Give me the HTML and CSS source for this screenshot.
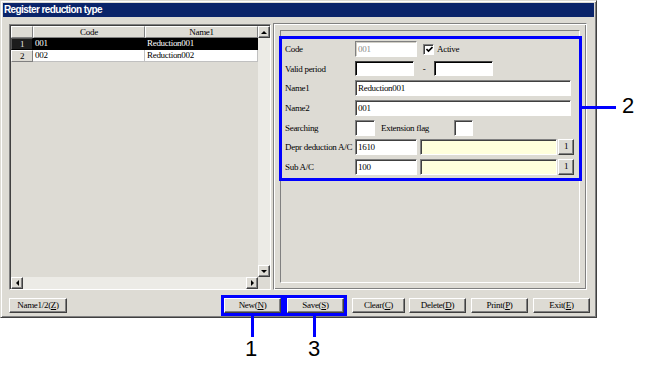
FILE: index.html
```html
<!DOCTYPE html>
<html lang="en">
<head>
  <meta charset="UTF-8">
  <title>Register reduction type</title>
  <link rel="stylesheet" href="styles.css">
</head>
<body>
  <div class="window">
    <div class="titlebar">Register reduction type</div>
    <div class="main">
      <div class="grid">
        <div class="grid-top">
          <div class="table">
            <div class="trow head">
              <div class="rh"></div>
              <div class="hc code">Code</div>
              <div class="hc name">Name1</div>
            </div>
            <div class="trow sel">
              <div class="rh">1</div>
              <div class="c code">001</div>
              <div class="c name">Reduction001</div>
            </div>
            <div class="trow">
              <div class="rh">2</div>
              <div class="c code">002</div>
              <div class="c name">Reduction002</div>
            </div>
          </div>
          <div class="vscroll">
            <div class="arrow up"></div>
            <div class="track"></div>
            <div class="arrow down"></div>
          </div>
        </div>
        <div class="hscroll">
          <div class="arrow left"></div>
          <div class="track"></div>
          <div class="arrow right"></div>
          <div class="corner"></div>
        </div>
      </div>

      <div class="side">
        <div class="inner">
          <div class="form">
            <div class="row">
              <div class="lbl">Code</div>
              <div class="field off w62">001</div>
              <div class="check">
                <svg width="7" height="7" viewBox="0 0 7 7"><path d="M0.5 3 L2.5 5 L6.5 1" fill="none" stroke="#000" stroke-width="1.6"/></svg>
              </div>
              <div class="check-lbl">Active</div>
            </div>
            <div class="row">
              <div class="lbl">Valid period</div>
              <div class="field dark w59"></div>
              <div class="dash">-</div>
              <div class="field dark w59"></div>
            </div>
            <div class="row">
              <div class="lbl">Name1</div>
              <div class="field w216">Reduction001</div>
            </div>
            <div class="row">
              <div class="lbl">Name2</div>
              <div class="field w216">001</div>
            </div>
            <div class="row">
              <div class="lbl">Searching</div>
              <div class="field w20"></div>
              <div class="lbl2">Extension flag</div>
              <div class="field w19"></div>
            </div>
            <div class="row">
              <div class="lbl">Depr deduction A/C</div>
              <div class="field w62">1610</div>
              <div class="field yellow w137"></div>
              <div class="pick">1</div>
            </div>
            <div class="row">
              <div class="lbl">Sub A/C</div>
              <div class="field w62">100</div>
              <div class="field yellow w137"></div>
              <div class="pick">1</div>
            </div>
          </div>
        </div>
      </div>
    </div>

    <div class="buttons">
      <div class="btn wide">Name1/2(<u>Z</u>)</div>
      <div class="mark first"><div class="btn">New(<u>N</u>)</div></div>
      <div class="mark"><div class="btn">Save(<u>S</u>)</div></div>
      <div class="btn clear">Clear(<u>C</u>)</div>
      <div class="btn gap4">Delete(<u>D</u>)</div>
      <div class="btn gap5">Print(<u>P</u>)</div>
      <div class="btn gap5">Exit(<u>E</u>)</div>
    </div>
  </div>

  <!-- callouts -->
  <div class="note hline"></div>
  <div class="note num n2">2</div>
  <div class="note vline v1"></div>
  <div class="note num n1">1</div>
  <div class="note vline v3"></div>
  <div class="note num n3">3</div>
</body>
</html>
```
FILE: styles.css
```css
body {
  margin: 0;
  background: #fff;
  font-family: "Liberation Serif", serif;
  font-size: 9px;
  letter-spacing: -0.3px;
  color: #000;
  position: relative;
  width: 647px;
  height: 368px;
  overflow: hidden;
}
.window {
  width: 597px;
  height: 318px;
  box-sizing: border-box;
  background: #dddbd4;
  border: 1px solid;
  border-color: #dddbd4 #404040 #404040 #dddbd4;
  box-shadow: inset 1px 1px #fff, inset -1px -1px #808080;
  padding: 2px;
  display: flex;
  flex-direction: column;
}
.titlebar {
  height: 14px;
  flex: none;
  background: #0a246a;
  color: #fff;
  font: bold 10px "Liberation Sans", sans-serif;
  line-height: 14px;
  padding-left: 1px;
  letter-spacing: -0.6px;
}
.main {
  display: flex;
  margin-top: 6px;
  height: 267px;
  flex: none;
  padding-left: 6px;
}

/* grid */
.grid {
  margin-top: 1px;
  width: 262px;
  height: 266px;
  box-sizing: border-box;
  border: 1px solid;
  border-color: #808080 #fff #fff #808080;
  box-shadow: inset 1px 1px #404040;
  padding: 1px 0 0 1px;
  display: flex;
  flex-direction: column;
}
.grid-top {
  flex: 1;
  display: flex;
  min-height: 0;
}
.table {
  flex: 1;
  background: #dddbd4;
}
.trow {
  display: flex;
  height: 12px;
}
.rh, .hc {
  box-sizing: border-box;
  background: #dddbd4;
  border: 1px solid;
  border-color: #fff #808080 #808080 #fff;
  text-align: center;
  line-height: 10px;
}
.rh {
  width: 22px;
}
.code {
  width: 112px;
}
.name {
  width: 113px;
}
.c {
  box-sizing: border-box;
  background: #fff;
  border-right: 1px solid #c0c0c0;
  border-bottom: 1px solid #c0c0c0;
  padding-left: 2px;
  line-height: 11px;
  white-space: nowrap;
}
.sel .c {
  background: #000;
  color: #fff;
  border-color: #000;
}
.sel .rh {
  background: #1c1c1c;
  color: #e8e8e8;
  border-color: #555 #000 #000 #555;
}
.vscroll {
  width: 12px;
  display: flex;
  flex-direction: column;
}
.hscroll {
  height: 12px;
  flex: none;
  display: flex;
}
.track {
  flex: 1;
  background: #ecebe6;
}
.corner {
  width: 12px;
  background: #dddbd4;
}
.arrow {
  width: 12px;
  height: 12px;
  flex: none;
  box-sizing: border-box;
  background: #dddbd4;
  border: 1px solid;
  border-color: #fff #404040 #404040 #fff;
  box-shadow: inset -1px -1px #808080;
  display: flex;
  align-items: center;
  justify-content: center;
}
.arrow::after {
  content: "";
  width: 0;
  height: 0;
}
.arrow.up::after {
  border-left: 3px solid transparent;
  border-right: 3px solid transparent;
  border-bottom: 3px solid #000;
}
.arrow.down::after {
  border-left: 3px solid transparent;
  border-right: 3px solid transparent;
  border-top: 3px solid #000;
}
.arrow.left::after {
  border-top: 3px solid transparent;
  border-bottom: 3px solid transparent;
  border-right: 3px solid #000;
}
.arrow.right::after {
  border-top: 3px solid transparent;
  border-bottom: 3px solid transparent;
  border-left: 3px solid #000;
}

/* right panel */
.side {
  margin-left: 2px;
  width: 314px;
  height: 267px;
  box-sizing: border-box;
  border: 1px solid;
  border-color: #808080 #fff #fff #808080;
  box-shadow: inset 1px 1px #fff, inset -1px -1px #808080;
  padding: 6px 0 0 6px;
}
.inner {
  width: 300px;
  height: 253px;
  box-sizing: border-box;
  border: 1px solid;
  border-color: #808080 #fff #fff #808080;
}
.form {
  margin: 5px -3px 0 -2px;
  border: 3px solid #0000ff;
  padding: 2px 0 3px 3px;
  display: flex;
  flex-direction: column;
  gap: 3.7px;
}
.row {
  display: flex;
  align-items: center;
  height: 16px;
}
.lbl {
  width: 70px;
  flex: none;
  white-space: nowrap;
}
.field {
  height: 16px;
  flex: none;
  box-sizing: border-box;
  background: #fff;
  border: 1px solid;
  border-color: #808080 #fff #fff #808080;
  box-shadow: inset 1px 1px #404040;
  padding-left: 2px;
  line-height: 14px;
  white-space: nowrap;
}
.field.off {
  box-shadow: inset 1px 1px #d0cec6;
  color: #8a8a8a;
}
.field.dark {
  height: 15px;
  border-color: #404040 #fff #fff #404040;
  box-shadow: inset 1px 1px #000;
}
.field.yellow {
  background: #ffffdc;
  margin-left: 3px;
}
.w62 { width: 62px; }
.w59 { width: 59px; }
.w216 { width: 216px; }
.w20 { width: 20px; }
.w19 { width: 19px; }
.w137 { width: 137px; }
.check {
  margin-left: 6px;
  width: 11px;
  height: 11px;
  box-sizing: border-box;
  background: #fff;
  border: 1px solid;
  border-color: #808080 #fff #fff #808080;
  box-shadow: inset 1px 1px #404040;
  display: flex;
  align-items: center;
  justify-content: center;
}
.check svg {
  margin: 1px 0 0 1px;
}
.check-lbl {
  margin-left: 3px;
}
.dash {
  width: 20px;
  text-align: center;
}
.lbl2 {
  margin-left: 6px;
  width: 73px;
  white-space: nowrap;
}
.pick {
  margin-left: 1px;
  width: 16px;
  height: 16px;
  box-sizing: border-box;
  background: #dddbd4;
  border: 1px solid;
  border-color: #fff #404040 #404040 #fff;
  box-shadow: inset -1px -1px #808080;
  text-align: center;
  line-height: 13px;
}

/* bottom buttons */
.buttons {
  display: flex;
  align-items: center;
  margin-top: 5px;
  height: 21px;
  flex: none;
  padding-left: 6px;
}
.btn {
  width: 57px;
  height: 15px;
  flex: none;
  box-sizing: border-box;
  background: #dddbd4;
  border: 1px solid;
  border-color: #fff #404040 #404040 #fff;
  box-shadow: inset -1px -1px #808080;
  text-align: center;
  line-height: 12px;
  white-space: nowrap;
}
.btn.wide {
  width: 58px;
}
.btn.clear {
  width: 53px;
  margin-left: 5px;
}
.gap4 {
  margin-left: 4px;
}
.gap5 {
  margin-left: 5px;
}
.mark {
  border: 3px solid #0000ff;
  display: flex;
}
.mark.first {
  margin-left: 154px;
}

/* callouts */
.note {
  position: absolute;
  letter-spacing: 0;
}
.hline {
  left: 582px;
  top: 106px;
  width: 34px;
  height: 3px;
  background: #0000ff;
}
.vline {
  top: 316px;
  width: 3px;
  height: 21px;
  background: #0000ff;
}
.v1 { left: 251px; }
.v3 { left: 313px; }
.num {
  font: 22px "Liberation Sans", sans-serif;
  line-height: 22px;
}
.n2 { left: 622px; top: 95px; }
.n1 { left: 245px; top: 338px; }
.n3 { left: 308px; top: 338px; }
```
